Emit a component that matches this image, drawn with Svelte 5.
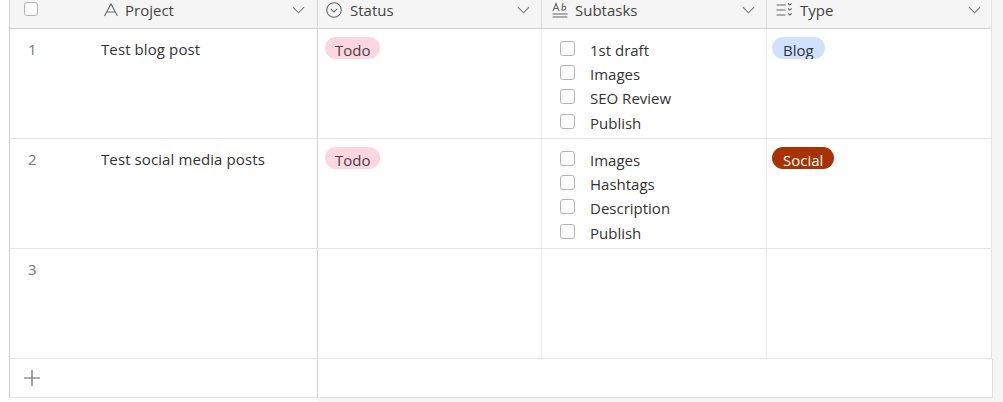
<script lang="ts">
  interface Row {
    id: number;
    project: string;
    status: string;
    subtasks: string[];
    type: string;
    typeClass: string;
  }

  const rows: Row[] = [
    {
      id: 1,
      project: "Test blog post",
      status: "Todo",
      subtasks: ["1st draft", "Images", "SEO Review", "Publish"],
      type: "Blog",
      typeClass: "blog",
    },
    {
      id: 2,
      project: "Test social media posts",
      status: "Todo",
      subtasks: ["Images", "Hashtags", "Description", "Publish"],
      type: "Social",
      typeClass: "social",
    },
    { id: 3, project: "", status: "", subtasks: [], type: "", typeClass: "" },
  ];
</script>

<div class="page">
  <div class="grid header">
    <div class="cell first">
      <span class="check head-check"></span>
      <svg class="icon" viewBox="0 0 16 16"><path d="M1.500 14 8 2l6.500 12M4 10h8" /></svg>
      <span class="label">Project</span>
      <svg class="chev" viewBox="0 0 14 8"><path d="M1 1l6 6 6-6" /></svg>
    </div>
    <div class="cell status-col">
      <svg class="icon" viewBox="0 0 16 16"><circle cx="8" cy="8" r="7.300" /><path d="M4.800 6.800 8 10l3.200-3.200" /></svg>
      <span class="label">Status</span>
      <svg class="chev" viewBox="0 0 14 8"><path d="M1 1l6 6 6-6" /></svg>
    </div>
    <div class="cell subtasks-col">
      <svg class="icon" viewBox="0 0 16 16"><path d="M1 9 4 1.500 7 9M2 6.500h4M.5 12h15M.5 15h15" /><path d="M11 1l-1.200 7.500M10.200 6c.5-2 3.800-2.500 3.500 0-.3 2.300-3.500 3-3.900 1" /></svg>
      <span class="label">Subtasks</span>
      <svg class="chev" viewBox="0 0 14 8"><path d="M1 1l6 6 6-6" /></svg>
    </div>
    <div class="cell type-col">
      <svg class="icon" viewBox="0 0 16 16"><path d="M.5 3h9M.5 8h9M.5 13h9M12 1.500 13.800 3l1.800-1.500M12 6.500 13.800 8l1.800-1.500M12 11.500l1.800 1.500 1.800-1.500" /></svg>
      <span class="label">Type</span>
      <svg class="chev" viewBox="0 0 14 8"><path d="M1 1l6 6 6-6" /></svg>
    </div>
  </div>

  {#each rows as row}
    <div class="grid row">
      <div class="cell first body-first">
        <span class="num">{row.id}</span>
        <span class="project">{row.project}</span>
      </div>
      <div class="cell body">
        {#if row.status}<span class="pill todo">{row.status}</span>{/if}
      </div>
      <div class="cell body tasks">
        {#each row.subtasks as task}
          <div class="task"><span class="check"></span><span>{task}</span></div>
        {/each}
      </div>
      <div class="cell body type-body">
        {#if row.type}<span class="pill {row.typeClass}">{row.type}</span>{/if}
      </div>
    </div>
  {/each}

  <div class="footer">
    <div class="add">
      <svg class="plus" viewBox="0 0 16 16"><path d="M8 0v16M0 8h16" /></svg>
    </div>
  </div>
</div>

<style>
  .page {
    width: 1003px;
    height: 402px;
    overflow: hidden;
    box-sizing: border-box;
    padding-left: 9px;
    background: linear-gradient(to right, #fff 318px, #f5f5f5 318px);
    font-family: "Open Sans", "Noto Sans", sans-serif;
    font-size: 15px;
    color: #333;
  }

  .grid {
    display: grid;
    grid-template-columns: 308px 224px 225px 224px;
    width: 983px;
    box-sizing: border-box;
    border-left: 1px solid #d0d0d0;
    border-right: 1px solid #e4e4e4;
  }

  .header {
    height: 29px;
    border-bottom: 1px solid #d0d0d0;
    background: #f5f5f5;
  }

  .row {
    height: 110px;
    background: #fff;
    border-bottom: 1px solid #e4e4e4;
  }

  .cell {
    display: flex;
    box-sizing: border-box;
    border-right: 1px solid #eee;
    min-width: 0;
  }

  .cell:last-child {
    border-right: none;
  }

  .cell.first {
    border-right: 1px solid #d0d0d0;
  }

  .header .cell {
    align-items: flex-start;
    height: 28px;
    padding: 2px 11px 0 8px;
    border-right-color: #dcdcdc;
  }

  .header .cell.first {
    padding-left: 14px;
    padding-right: 12px;
    border-right-color: #d0d0d0;
  }

  .header .subtasks-col {
    padding-left: 10px;
  }

  .header .type-col {
    padding-left: 9px;
    padding-right: 10px;
  }

  .head-check {
    margin-right: 65px;
  }

  .icon {
    width: 16px;
    height: 16px;
    flex: none;
    fill: none;
    stroke: #666;
    stroke-width: 1.100;
  }

  .label {
    margin-left: 8px;
    margin-top: -2px;
    color: #444;
  }

  .first .label {
    margin-left: 6px;
  }

  .subtasks-col .label {
    margin-left: 7px;
  }

  .chev {
    margin-left: auto;
    margin-top: 4px;
    width: 13px;
    height: 8px;
    fill: none;
    stroke: #777;
    stroke-width: 1.200;
  }

  .body-first {
    align-items: flex-start;
    padding: 10px 0 0 18px;
  }

  .num {
    width: 73px;
    flex: none;
    color: #777;
  }

  .project {
    color: #333;
    letter-spacing: 0.1px;
  }

  .body {
    align-items: flex-start;
    padding: 8px 7px 0;
  }

  .type-body {
    padding-left: 5px;
  }

  .pill {
    display: block;
    height: 22px;
    line-height: 26px;
    padding: 0 11px;
    border-radius: 11px;
    overflow: hidden;
  }

  .todo {
    padding: 0 9px 0 10px;
    background: #ffd5e0;
    color: #444;
  }

  .blog {
    background: #d0e2fb;
    color: #334;
  }

  .social {
    background: #a83200;
    color: #fff;
  }

  .tasks {
    flex-direction: column;
    padding: 9px 0 0 18px;
  }

  .task {
    display: flex;
    align-items: center;
    height: 24.200px;
    color: #333;
  }

  .check {
    display: block;
    flex: none;
    width: 14px;
    height: 14px;
    box-sizing: border-box;
    border: 1.500px solid #b4b4b4;
    border-radius: 3px;
    background: #fff;
  }

  .task .check {
    width: 15px;
    height: 15px;
    margin-right: 15px;
    margin-top: -3px;
  }

  .footer {
    width: 984px;
    height: 39px;
    box-sizing: border-box;
    background: #fff;
    border: 1px solid #e0e0e0;
    border-top: none;
    border-left-color: #d0d0d0;
    display: flex;
  }

  .add {
    width: 308px;
    border-right: 1px solid #d0d0d0;
    display: flex;
    align-items: center;
    padding-left: 14px;
    box-sizing: border-box;
  }

  .plus {
    width: 16px;
    height: 16px;
    fill: none;
    stroke: #666;
    stroke-width: 1.200;
  }
</style>
